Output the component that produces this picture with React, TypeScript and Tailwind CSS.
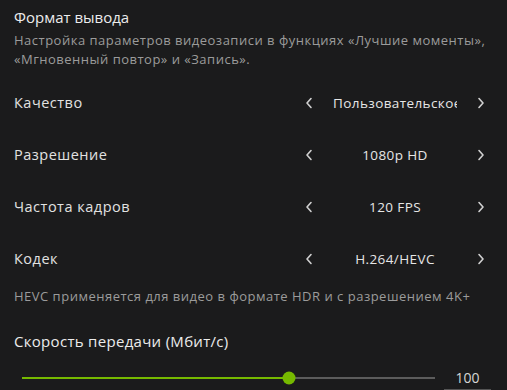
import React from "react";

type Option = { label: string; value: string };

const options: Option[] = [
  { label: "Качество", value: "Пользовательское" },
  { label: "Разрешение", value: "1080p HD" },
  { label: "Частота кадров", value: "120 FPS" },
  { label: "Кодек", value: "H.264/HEVC" },
];

function Chevron({ dir }: { dir: "left" | "right" }) {
  return (
    <svg width="8" height="12" viewBox="0 0 8 12" className="block">
      <polyline
        points={dir === "left" ? "6,1.5 2,6 6,10.5" : "2,1.5 6,6 2,10.5"}
        fill="none"
        stroke="#d0d0d0"
        strokeWidth="1.6"
        strokeLinecap="round"
        strokeLinejoin="round"
      />
    </svg>
  );
}

function Stepper({ label, value }: Option) {
  return (
    <div className="flex h-[52px] items-center">
      <span className="text-[14.5px] tracking-[0.5px] text-[#e2e2e2]">{label}</span>
      <div className="ml-auto flex items-center">
        <button type="button" className="flex h-[24px] w-[20px] items-center justify-center">
          <Chevron dir="left" />
        </button>
        <div className="mx-[14px] w-[124px] overflow-hidden whitespace-nowrap text-center text-[13.5px] tracking-[0.4px] text-[#e6e6e6]">
          {value}
        </div>
        <button type="button" className="flex h-[24px] w-[20px] items-center justify-center">
          <Chevron dir="right" />
        </button>
      </div>
    </div>
  );
}

export default function App() {
  const pct = 64.6;
  return (
    <div
      className="h-[390px] w-[507px] overflow-hidden bg-[#1b1b1c] pl-[14px] pr-[16px] pt-[7px]"
      style={{ fontFamily: "'Open Sans', 'Noto Sans', sans-serif" }}
    >
      <h2 className="text-[15px] leading-[20px] text-[#ececec]">Формат вывода</h2>
      <p className="mt-[4px] whitespace-nowrap text-[13px] leading-[19px] tracking-[0.5px] text-[#9b9b9b]">
        Настройка параметров видеозаписи в функциях «Лучшие моменты»,
        <br />
        «Мгновенный повтор» и «Запись».
      </p>

      <div className="mt-[8px]">
        {options.map((o) => (
          <Stepper key={o.label} {...o} />
        ))}
      </div>

      <p className="mt-[2px] whitespace-nowrap text-[13px] leading-[18px] tracking-[0.5px] text-[#9b9b9b]">
        HEVC применяется для видео в формате HDR и с разрешением 4K+
      </p>

      <h3 className="mt-[26px] text-[15px] leading-[20px] tracking-[0.3px] text-[#ececec]">
        Скорость передачи (Мбит/с)
      </h3>

      <div className="mt-[14px] flex h-[25px] items-center pl-[8px]">
        <div className="relative h-[2px] w-[415px] bg-[#5c5c5c]">
          <div className="h-full bg-[#76b900]" style={{ width: `${pct}%` }} />
          <div
            className="absolute top-1/2 h-[13px] w-[13px] -translate-x-1/2 -translate-y-1/2 rounded-full bg-[#76b900]"
            style={{ left: `${pct}%` }}
          />
        </div>
        <div className="ml-[9px] flex h-[25px] w-[47px] items-center justify-center border-b border-[#555] text-[14px] text-[#d6d6d6]">
          100
        </div>
      </div>
    </div>
  );
}
